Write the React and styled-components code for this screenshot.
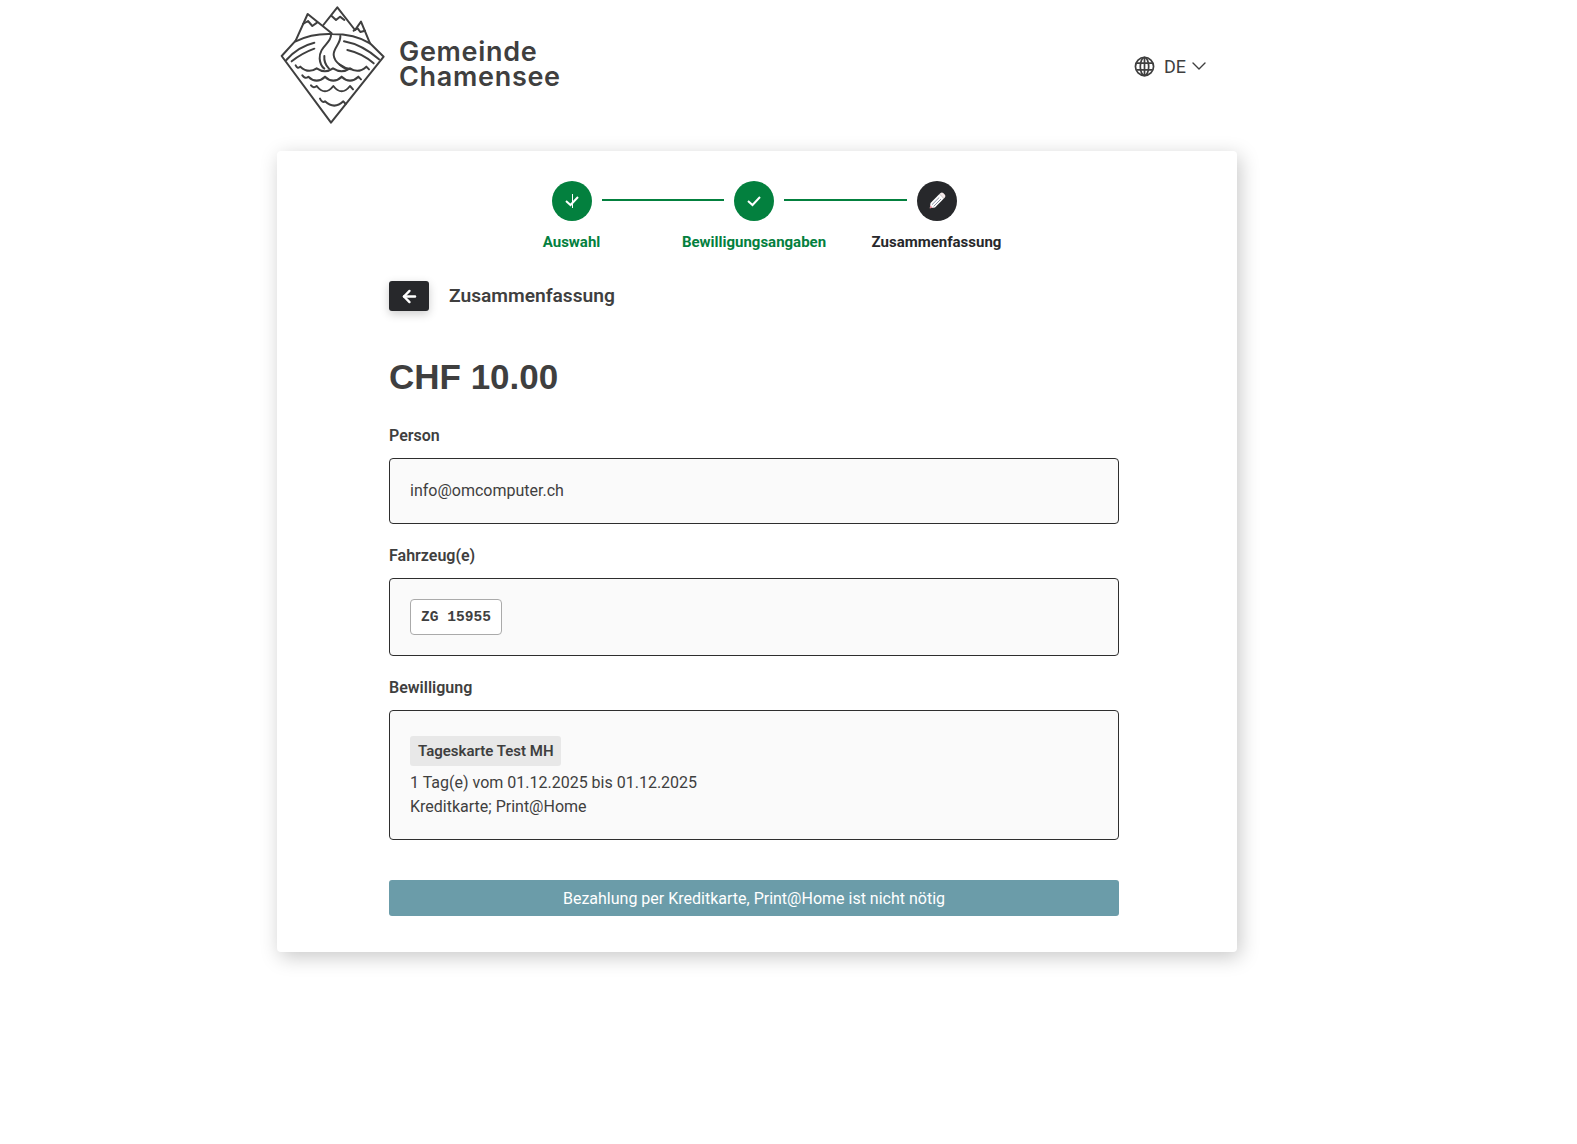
import React from 'react';
import styled, { createGlobalStyle } from 'styled-components';
import { ChevronDown, ArrowLeft } from 'lucide-react';

const GlobalStyle = createGlobalStyle`
	html, body {
		margin: 0;
		padding: 0;
		background: #fff;
		color: #3f3f3f;
		font-family: Roboto, "Liberation Sans", sans-serif;
	}
`;

function Logo() {
	return (
		<LogoSvg viewBox="0 0 360 390" fill="none" stroke="#3f3f3f" strokeWidth="6" strokeLinejoin="round" strokeLinecap="round">
			<path d="M62 122 L98 42 L170 100" />
			<path d="M145 75 L187 22 L240 90 L258 65 L285 130 L326 170 L168 368 L20 168 L62 122" />
			<path d="M84 72 L99 63 L112 78 L126 68" />
			<path d="M170 48 L183 60 L195 50 L208 60" />
			<path d="M236 92 L248 85 L256 96 L270 92" />
			<path d="M62 124 Q110 100 170 102 Q240 102 285 130" />
			<path d="M34 180 Q68 140 118 128" />
			<path d="M50 184 Q80 160 118 146" />
			<path d="M207 124 Q262 134 312 178" />
			<path d="M217 150 Q262 160 296 190" />
			<path d="M168 106 C168 130 132 140 134 176 C135 190 140 200 148 206" />
			<path d="M196 108 C198 130 174 145 176 165 C178 188 205 205 228 208" />
			<path d="M148 168 Q146 190 162 206" />
			<path d="M194 194 Q204 204 216 208" />
			<path d="M62 196 Q68 208 76 200 Q100 222 125 205 Q150 222 174 205 Q200 222 225 205 Q250 222 274 200 L282 208" />
			<path d="M82 226 Q90 238 100 230 Q125 254 150 230 Q175 254 200 230 Q225 254 250 230 L258 238" />
			<path d="M108 256 Q116 266 125 258 Q150 290 175 258 Q200 290 225 258 L234 268" />
			<path d="M135 296 Q142 310 150 304 Q178 330 205 304 L212 312" />
		</LogoSvg>
	);
}

function GlobeIcon() {
	return (
		<svg width="21" height="21" viewBox="0 0 22 22" fill="none" stroke="#3f3f3f" strokeWidth="1.8">
			<circle cx="11" cy="11" r="9.5" />
			<ellipse cx="11" cy="11" rx="4.4" ry="9.5" />
			<path d="M2.6 7.4 H19.4 M2.6 14.6 H19.4 M11 1.5 V20.5" />
		</svg>
	);
}

function CheckMark({ cross }) {
	return (
		<svg width="18" height="18" viewBox="0 0 18 18" fill="none" stroke="#fff">
			<path d="M3 9 L7.5 13 L15 5" strokeWidth="2" />
			{cross && <path d="M9.5 2 V16" strokeWidth="1" />}
		</svg>
	);
}

function Pencil() {
	return (
		<svg width="20" height="20" viewBox="0 0 18 18">
			<path d="M2.5 15.5 L3.2 10.8 L11.2 2.8 L15.2 6.8 L7.2 14.8 Z" fill="#fff" />
			<path d="M12.2 1.9 Q13.4 0.9 14.6 1.9 L16.1 3.4 Q17.1 4.6 16.1 5.8 L15.2 6.8 L11.2 2.8 Z" fill="#f3e8e8" />
			<path d="M4.4 12.4 L11 5.8 M6 13.8 L12.6 7.2" stroke="#7a7f95" strokeWidth="0.8" />
			<path d="M2.5 15.5 L3 12.9 L5.1 15 Z" fill="#e58a9a" />
		</svg>
	);
}

export default function App() {
	return (
		<Page>
			<GlobalStyle />
			<Header>
				<Brand>
					<Logo />
					<BrandName>Gemeinde<br />Chamensee</BrandName>
				</Brand>
				<Language>
					<GlobeIcon />
					<span>DE</span>
					<ChevronDown size={24} strokeWidth={1.4} />
				</Language>
			</Header>
			<Card>
				<Stepper>
					<Circles>
						<Circle $done><CheckMark cross /></Circle>
						<Line />
						<Circle $done><CheckMark /></Circle>
						<Line />
						<Circle><Pencil /></Circle>
					</Circles>
					<StepLabels>
						<StepLabel $done>Auswahl</StepLabel>
						<StepLabel $done>Bewilligungsangaben</StepLabel>
						<StepLabel>Zusammenfassung</StepLabel>
					</StepLabels>
				</Stepper>
				<Content>
					<TitleRow>
						<BackButton type="button"><ArrowLeft size={19} strokeWidth={3} /></BackButton>
						<Title>Zusammenfassung</Title>
					</TitleRow>
					<Price>CHF 10.00</Price>
					<FieldLabel>Person</FieldLabel>
					<Field>info@omcomputer.ch</Field>
					<FieldLabel>Fahrzeug(e)</FieldLabel>
					<Field>
						<Plate>ZG 15955</Plate>
					</Field>
					<FieldLabel>Bewilligung</FieldLabel>
					<PermitField>
						<Tag>Tageskarte Test MH</Tag>
						<div>1 Tag(e) vom 01.12.2025 bis 01.12.2025</div>
						<div>Kreditkarte; Print@Home</div>
					</PermitField>
					<PayButton type="button">Bezahlung per Kreditkarte, Print@Home ist nicht nötig</PayButton>
				</Content>
			</Card>
		</Page>
	);
}

const Page = styled.div`
	width: 960px;
	min-height: 1144px;
	margin-left: 277px;
`;

const Header = styled.header`
	height: 151px;
	display: flex;
	justify-content: space-between;
	align-items: flex-start;
`;

const Brand = styled.div`
	display: flex;
	align-items: flex-start;
`;

const LogoSvg = styled.svg`
	width: 120px;
	height: 130px;
	margin-left: -2px;
	flex-shrink: 0;
`;

const BrandName = styled.div`
	margin: 39px 0 0 4px;
	font-family: Inter, sans-serif;
	font-size: 27px;
	font-weight: 600;
	letter-spacing: 0.7px;
	line-height: 25px;
	color: #3f3f3f;
`;

const Language = styled.div`
	display: flex;
	align-items: center;
	gap: 9px;
	margin: 54px 26px 0 0;
	font-size: 18px;
	color: #3f3f3f;

	svg:last-child {
		margin-left: -8px;
	}
`;

const Card = styled.main`
	height: 801px;
	box-sizing: border-box;
	padding: 30px 118px 0 112px;
	background: #fff;
	border-radius: 4px;
	box-shadow: 3px 5px 20px rgba(0, 0, 0, 0.22);
`;

const Stepper = styled.div`
	display: flex;
	flex-direction: column;
	align-items: center;
`;

const Circles = styled.div`
	display: flex;
	align-items: center;
	gap: 10px;
`;

const Circle = styled.div`
	width: 40px;
	height: 40px;
	border-radius: 50%;
	display: flex;
	align-items: center;
	justify-content: center;
	background: ${p => (p.$done ? '#03803e' : '#27282b')};
`;

const Line = styled.div`
	width: 122.5px;
	height: 2px;
	margin-top: -2px;
	background: #03803e;
`;

const StepLabels = styled.div`
	display: grid;
	grid-template-columns: repeat(3, 182.5px);
	margin-top: 11px;
`;

const StepLabel = styled.div`
	text-align: center;
	font-size: 15px;
	font-weight: 700;
	line-height: 20px;
	white-space: nowrap;
	color: ${p => (p.$done ? '#03803e' : '#27282b')};
`;

const Content = styled.div`
	display: flex;
	flex-direction: column;
	margin-top: 29px;
`;

const TitleRow = styled.div`
	display: flex;
	align-items: center;
	gap: 20px;
`;

const BackButton = styled.button`
	width: 40px;
	height: 30px;
	padding: 0;
	border: none;
	border-radius: 3px;
	display: flex;
	align-items: center;
	justify-content: center;
	color: #fff;
	background: #27282b;
	box-shadow: 0 3px 10px rgba(0, 0, 0, 0.2);
`;

const Title = styled.h2`
	margin: -2px 0 0;
	font-size: 19.2px;
	font-weight: 600;
	color: #3f3f3f;
`;

const Price = styled.div`
	margin: 46px 0 7px;
	font-family: "Liberation Sans", Arial, sans-serif;
	font-size: 35px;
	font-weight: 700;
	line-height: 40px;
	color: #3f3f3f;
`;

const FieldLabel = styled.div`
	margin-top: 22px;
	font-size: 16px;
	font-weight: 600;
	line-height: 20px;
	color: #3f3f3f;
`;

const Field = styled.div`
	margin-top: 12px;
	padding: 20px;
	border: 1px solid #2e2e2e;
	border-radius: 4px;
	background: #fafafa;
	font-size: 16px;
	line-height: 24px;
`;

const PermitField = styled(Field)`
	padding-top: 25px;
	padding-bottom: 20px;
`;

const Plate = styled.span`
	display: inline-block;
	padding: 1px 10px 0;
	border: 1px solid #aaa;
	border-radius: 4px;
	background: #fff;
	font-family: "Liberation Mono", monospace;
	font-size: 14.6px;
	font-weight: 700;
	line-height: 33px;
	vertical-align: top;
`;

const Tag = styled.div`
	display: inline-block;
	padding: 0 7px 0 8px;
	border-radius: 3px;
	background: #e8e8e8;
	font-size: 15px;
	font-weight: 600;
	line-height: 30px;
	vertical-align: top;
	margin-bottom: 5px;
`;

const PayButton = styled.button`
	margin-top: 40px;
	height: 36px;
	border: none;
	border-radius: 3px;
	background: #6b9ca9;
	color: #fff;
	font-family: Roboto, sans-serif;
	font-size: 16px;
`;
